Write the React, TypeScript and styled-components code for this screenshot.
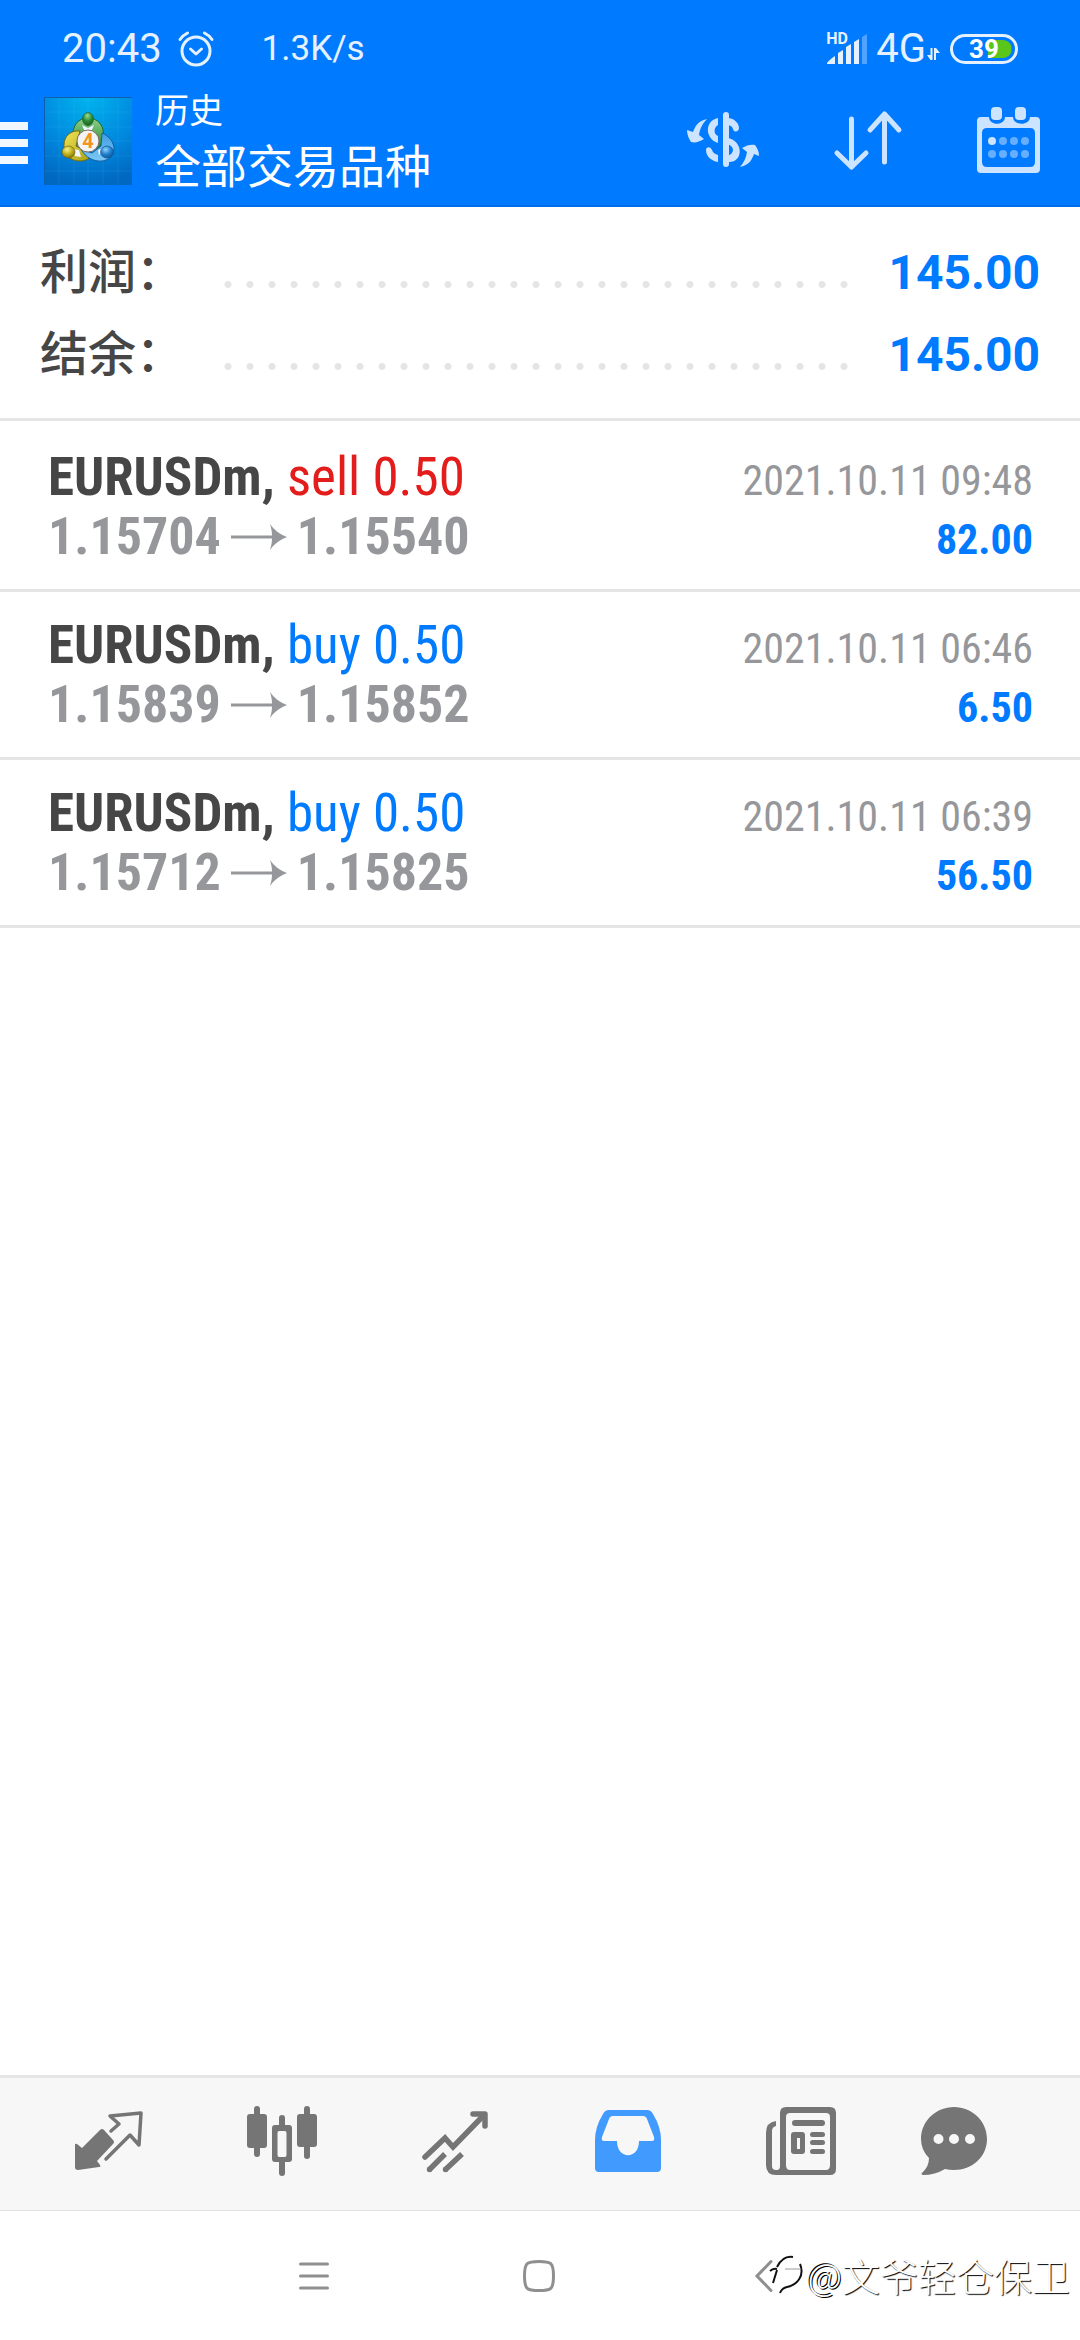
import React from "react";
import styled, { createGlobalStyle } from "styled-components";

const sans = `Roboto, "Noto Sans CJK SC", sans-serif`;
const narrow = `"Roboto Condensed", "Liberation Sans Narrow", "Arial Narrow", Roboto, "Noto Sans CJK SC", sans-serif`;

const Global = createGlobalStyle`
  * { box-sizing: border-box; }
  body { margin: 0; background: #fff; font-family: ${sans}; }
  dl, dd, dt, ul, h1, p { margin: 0; padding: 0; font-weight: inherit; }
  ul { list-style: none; }
  svg { display: block; overflow: visible; }
  button { margin: 0; padding: 0; border: 0; background: none; color: inherit; font: inherit; cursor: pointer; }
`;

const Screen = styled.div`
  min-height: 100vh;
  display: flex;
  flex-direction: column;
`;

const Header = styled.header`
  background: #007aff;
  border-bottom: 2px solid #006ee6;
  color: #fff;
`;

const StatusBar = styled.div`
  height: 90px;
  padding: 8px 62px 0 62px;
  display: flex;
  align-items: center;
  color: #e5f1ff;
`;

const StatusText = styled.span<{ $size: number }>`
  font-size: ${(p) => p.$size}px;
  line-height: 44px;
`;

const Alarm = styled.svg`
  margin: 0 48px 0 16px;
`;

const Signals = styled.div`
  margin-left: auto;
  display: flex;
  align-items: center;
`;

const Signal = styled.div`
  position: relative;
  width: 42px;
  height: 32px;
  margin-right: 8px;
`;

const HdMark = styled.span`
  position: absolute;
  left: 0;
  top: -1px;
  font-size: 16px;
  line-height: 14px;
  font-weight: 700;
`;

const Battery = styled.div`
  width: 68px;
  height: 30px;
  margin-left: 10px;
  padding: 3px;
  border: 3px solid #e5f1ff;
  border-radius: 15px;
  display: flex;
  align-items: center;
  justify-content: center;
  font: 700 26px/18px ${sans};
  color: #fff;
`;

const Charge = styled.span`
  flex: 1;
  border-radius: 9px;
  background: linear-gradient(#5ac51a, #5ac51a) right center / 42% 100% no-repeat;
  text-align: center;
`;

const AppBar = styled.div`
  height: 115px;
  padding-right: 39px;
  display: flex;
  align-items: flex-start;
`;

const MenuButton = styled.button`
  width: 28px;
  margin: 32px 16px 0 0;
  display: grid;
  gap: 9px;
`;

const MenuBar = styled.span`
  height: 8px;
  background: #f0f7ff;
`;

const Logo = styled.svg`
  margin: 7px 23px 0 0;
`;

const Titles = styled.div`
  flex: 1;
`;

const Caption = styled.p`
  font-size: 34px;
  line-height: 43px;
`;

const Title = styled.h1`
  font-size: 46px;
  line-height: 68px;
`;

const Actions = styled.div`
  display: flex;
  gap: 75px;
  margin-top: 17px;
  color: #cce4ff;
`;

const Summary = styled.dl`
  padding: 25px 40px 22px;
  border-bottom: 3px solid #e5e5e5;
`;

const SummaryRow = styled.div`
  height: 82px;
  display: flex;
  align-items: center;
  font-size: 48px;
  line-height: 82px;
`;

const Label = styled.dt`
  width: 177px;
  color: #464646;
  font-weight: 500;
`;

const Dots = styled.span`
  flex: 1;
  height: 7px;
  margin: 22px 33px 0 0;
  background: radial-gradient(circle at center, #e5e5e5 3px, transparent 4px) left center / 22px 7px repeat-x;
`;

const Total = styled.dd`
  color: #007aff;
  font-weight: 700;
`;

const Deals = styled.ul`
  padding-top: 3px;
`;

const Deal = styled.li`
  padding: 24px 47px 23px 48px;
  border-bottom: 3px solid #e5e5e5;
  font-family: ${narrow};
`;

const Line = styled.div<{ $size: number }>`
  height: 59px;
  display: flex;
  align-items: baseline;
  justify-content: space-between;
  font-size: ${(p) => p.$size}px;
  line-height: 59px;
`;

const Big = styled.span<{ $color: string; $bold?: boolean }>`
  color: ${(p) => p.$color};
  font-weight: ${(p) => (p.$bold ? 700 : 400)};
`;

const Small = styled.span<{ $color: string; $bold?: boolean }>`
  font-size: 42px;
  color: ${(p) => p.$color};
  font-weight: ${(p) => (p.$bold ? 700 : 400)};
`;

const Prices = styled.span`
  display: flex;
  align-items: center;
  gap: 10px;
`;

const Empty = styled.div`
  flex: 1;
`;

const Tabs = styled.nav`
  height: 136px;
  padding: 0 60px 6px 22px;
  display: grid;
  grid-template-columns: repeat(5, 173fr) 133fr;
  border-top: 3px solid #e5e5e5;
  border-bottom: 1px solid #e0e0e0;
  background: #f7f7f7;
`;

const Tab = styled.button<{ $active?: boolean }>`
  display: flex;
  align-items: center;
  justify-content: center;
  color: ${(p) => (p.$active ? "#419bff" : "#757575")};
`;

const SystemNav = styled.nav`
  position: relative;
  height: 129px;
  padding: 0 204px 0 202px;
  display: grid;
  grid-template-columns: repeat(3, 1fr);
  color: #8f8f8f;
`;

const SystemButton = styled.button`
  display: flex;
  align-items: center;
  justify-content: center;
`;

const Watermark = styled.div`
  position: absolute;
  right: 10px;
  top: 35px;
  display: flex;
  align-items: center;
  gap: 3px;
  color: #fff;
  font: 300 38px/58px "Noto Sans CJK SC", sans-serif;
  text-shadow: 1px 1px 1px #000;
`;

const Handle = styled.span`
  text-shadow: 1px 1px 0 #000, -1px -1px 0 #000;
`;

const deals = [
  { side: "sell", volume: "0.50", open: "1.15704", close: "1.15540", time: "2021.10.11 09:48", profit: "82.00" },
  { side: "buy", volume: "0.50", open: "1.15839", close: "1.15852", time: "2021.10.11 06:46", profit: "6.50" },
  { side: "buy", volume: "0.50", open: "1.15712", close: "1.15825", time: "2021.10.11 06:39", profit: "56.50" },
];

const totals = [
  { label: "利润：", value: "145.00" },
  { label: "结余：", value: "145.00" },
];

function AlarmIcon() {
  return (
    <Alarm width="36" height="36" viewBox="0 0 36 36" fill="none" stroke="currentColor" strokeWidth="3" strokeLinecap="round" strokeLinejoin="round">
      <circle cx="18" cy="20" r="14" />
      <path d="M12.5 18l5.500 5 5.500-5M2 8.500C4 5.500 6.500 3.500 9.500 2M34 8.500C32 5.500 29.500 3.500 26.500 2" />
    </Alarm>
  );
}

function SignalIcon() {
  return (
    <Signal>
      <HdMark>HD</HdMark>
      <svg width="42" height="32" viewBox="0 0 42 32" fill="currentColor">
        <path d="M1 30c2-3 5-5 8-7v8H1zM12 20l5-3v14h-5zM20 14l5-3v20h-5zM28 9l5-3v25h-5z" />
        <path d="M36 4l5-3v30h-5z" opacity=".35" />
      </svg>
    </Signal>
  );
}

function DataArrows() {
  return (
    <svg width="14" height="26" viewBox="0 0 14 26" fill="currentColor">
      <path d="M4.500 12h2v12h-2L1 19h3.500zM8 12h2l4 5h-4v7H8z" />
    </svg>
  );
}

function LogoIcon() {
  return (
    <Logo width="88" height="88" viewBox="0 0 88 88">
      <defs>
        <radialGradient id="bg" cx=".5" cy="0" r="1">
          <stop offset="0" stopColor="#00b4ee" />
          <stop offset=".6" stopColor="#0087de" />
          <stop offset="1" stopColor="#0068c0" />
        </radialGradient>
        <linearGradient id="green" x2="0" y2="1">
          <stop offset="0" stopColor="#8fd08a" />
          <stop offset="1" stopColor="#23842c" />
        </linearGradient>
        <linearGradient id="yellow" x2="1" y2="1">
          <stop offset="0" stopColor="#f0e65a" />
          <stop offset="1" stopColor="#a89a0c" />
        </linearGradient>
        <linearGradient id="blue" x2="0" y2="1">
          <stop offset="0" stopColor="#3f9de0" />
          <stop offset="1" stopColor="#7cc8f6" />
        </linearGradient>
        <radialGradient id="greenHead" cx=".45" cy=".25" r=".8">
          <stop offset="0" stopColor="#9bdc90" />
          <stop offset=".5" stopColor="#2f8f38" />
          <stop offset="1" stopColor="#145c20" />
        </radialGradient>
        <radialGradient id="yellowHead" cx=".4" cy=".3" r=".8">
          <stop offset="0" stopColor="#f7f08a" />
          <stop offset=".5" stopColor="#c0b01c" />
          <stop offset="1" stopColor="#6f6606" />
        </radialGradient>
        <radialGradient id="blueHead" cx=".4" cy=".3" r=".8">
          <stop offset="0" stopColor="#8fd0ff" />
          <stop offset=".5" stopColor="#2180cc" />
          <stop offset="1" stopColor="#0a4f92" />
        </radialGradient>
      </defs>
      <rect width="88" height="88" fill="url(#bg)" />
      <path d="M15 0v88M30 0v88M44 0v88M59 0v88M74 0v88M0 15h88M0 30h88M0 44h88M0 59h88M0 74h88" stroke="#6fd0ff" strokeOpacity=".12" />
      <path d="M.5 88V.5H88" fill="none" stroke="#0a5fae" />
      <path d="M29 40c-1-11 5-19 15-19s17 8 15 19c-1 7-3 10-6 12l-5-16-4-4-5 5z" fill="url(#green)" stroke="#1c6b2a" />
      <path d="M36 34c-9-1-16 5-16 14-1 10 7 16 16 16 6 0 11-3 13-7l-9-4-8-4z" fill="url(#yellow)" stroke="#756c0c" />
      <path d="M58 36c7 3 12 9 12 16-1 8-8 13-16 12-8-1-14-6-17-12l11 4 9-7z" fill="url(#blue)" stroke="#14609f" />
      <path d="M38 28l6 3 6-3-3 7h-6zM28 52l7 1 2 7-6-1zM55 58l-1-5 5-2-1 4z" fill="#eef6ff" />
      <ellipse cx="44" cy="22" rx="5.500" ry="6.500" fill="url(#greenHead)" stroke="#165a22" strokeWidth=".6" />
      <ellipse cx="24.500" cy="55" rx="6.500" ry="6" fill="url(#yellowHead)" stroke="#6a6208" strokeWidth=".6" />
      <ellipse cx="63" cy="55" rx="6.500" ry="6" fill="url(#blueHead)" stroke="#0d4c88" strokeWidth=".6" />
      <circle cx="44" cy="44" r="11" fill="#f4f4f6" stroke="#7d6a66" />
      <text x="44" y="51" textAnchor="middle" fontFamily="Roboto" fontSize="20" fontWeight="700" fill="#f59321">4</text>
    </Logo>
  );
}

function CurrencyIcon() {
  return (
    <svg width="72" height="66" viewBox="0 0 72 66" fill="currentColor">
      <path d="M20 12C10 14 8 20 6 25L0 23c0 5 2 9 4 12 4 1 8 0 13-3l-5-4c1-6 3-11 8-16z" />
      <path d="M53 60c10-2 12-8 14-13l5 2c0-5-2-8-4-11-4-1-8 0-13 3l5 4c-1 6-3 10-7 15z" />
      <rect x="36" y="5" width="6" height="55" rx="3" />
      <path d="M31 11v7c-4 2-5 9 0 11v7c-13-4-14-22 0-25zM31 48v7c-7-1-12-6-12-12 0-3 4-4 6 0 1 3 3 4 6 5z" />
      <path d="M40 11c7 0 12 5 12 10 0 4-5 5-6 1-1-3-3-4-6-4zM40 31c17 2 17 26 0 24v-6c8-2 8-10 0-12z" />
    </svg>
  );
}

function SortIcon() {
  return (
    <svg width="68" height="66" viewBox="0 0 68 66" fill="none" stroke="currentColor" strokeWidth="5" strokeLinecap="round" strokeLinejoin="round">
      <path d="M17.500 12v48M3 46l14.500 14L32 46M50.500 55V7M36 23L50.500 7 65 23" />
    </svg>
  );
}

function CalendarIcon() {
  return (
    <svg width="64" height="66" viewBox="0 0 64 66" fill="currentColor">
      <path fillRule="evenodd" d="M4 10h8c0 9 16 9 16 0h8c0 9 17 9 17 0h6q4 0 4 4v48q0 4-4 4H4q-4 0-4-4V14q0-4 4-4zm6 11q-5 0-5 5v29q0 5 5 5h43q5 0 5-5V26q0-5-5-5z" />
      <rect x="14" y="0" width="11" height="13" rx="4" />
      <rect x="38" y="0" width="11" height="13" rx="4" />
      <circle cx="15" cy="34" r="4" />
      <g opacity=".5">
        <circle cx="26" cy="34" r="4" />
        <circle cx="37" cy="34" r="4" />
        <circle cx="48" cy="34" r="4" />
        <circle cx="15" cy="47" r="4" />
        <circle cx="26" cy="47" r="4" />
        <circle cx="37" cy="47" r="4" />
        <circle cx="48" cy="47" r="4" />
      </g>
    </svg>
  );
}

function PriceArrow() {
  return (
    <svg width="56" height="26" viewBox="0 0 56 26" fill="#96979b">
      <path d="M0 11.500h41C41 7 40 4 39 0q6 9 17 13-11 4-17 13c1-4 2-7 2-11.500H0z" />
    </svg>
  );
}

function QuotesIcon() {
  return (
    <svg width="68" height="60" viewBox="0 0 68 60">
      <path d="M0 34q0-2 2-1l5 4 18-18q2-2 4 0l9 10q2 2 0 4L22 50l3 4q1 2-1 2L3 59q-3 0-3-3z" fill="currentColor" />
      <path d="M36 20l8-7-9-8 31-3-2 32-9-10-24 24" fill="none" stroke="currentColor" strokeWidth="3.500" strokeLinecap="round" strokeLinejoin="round" />
    </svg>
  );
}

function CandlesIcon() {
  return (
    <svg width="70" height="70" viewBox="0 0 70 70" fill="currentColor">
      <rect x="7" y="0" width="6" height="51" rx="3" />
      <rect x="0" y="8" width="20" height="34" rx="3" />
      <rect x="57" y="0" width="6" height="53" rx="3" />
      <rect x="50" y="8" width="20" height="33" rx="3" />
      <rect x="32" y="9" width="6" height="14" rx="3" />
      <rect x="32" y="52" width="6" height="18" rx="3" />
      <path fillRule="evenodd" d="M28 19h14q3 0 3 3v31q0 3-3 3H28q-3 0-3-3V22q0-3 3-3zm4 6q-1.500 0-1.500 2v22q0 2 1.500 2h6q1.500 0 1.500-2V27q0-2-1.500-2z" />
    </svg>
  );
}

function ChartIcon() {
  return (
    <svg width="66" height="62" viewBox="0 0 66 62" fill="none" stroke="currentColor" strokeWidth="5.500" strokeLinejoin="miter">
      <path d="M3 47l20-19 8 9L62 5" strokeLinecap="round" />
      <path d="M51 4h12v12" strokeLinecap="round" strokeLinejoin="round" />
      <path d="M7 60l16-16M23 60l17-16" />
      <g fill="currentColor" stroke="none">
        <circle cx="7.500" cy="59.500" r="2.700" />
        <circle cx="23.500" cy="59.500" r="2.700" />
      </g>
    </svg>
  );
}

function TradeIcon() {
  return (
    <svg width="66" height="62" viewBox="0 0 66 62" fill="currentColor">
      <path fillRule="evenodd" d="M14 0h38q4 0 6 4 8 13 8 26v28q0 4-4 4H4q-4 0-4-4V30Q0 17 8 4q2-4 6-4zm4 6q-3 0-4 3L7 27q-1 4 2 4h13c0 19 22 19 22 0h13q3 0 2-4L52 9q-1-3-4-3z" />
    </svg>
  );
}

function NewsIcon() {
  return (
    <svg width="70" height="68" viewBox="0 0 70 68" fill="currentColor">
      <path fillRule="evenodd" d="M20 0h44q6 0 6 6v56q0 6-6 6H10Q0 68 0 58V26q0-11 10-12v5q-4 1-4 5v35q0 4 4 4h1q3 0 3-4V6q0-6 6-6zm4 6q-4 0-4 4v48q0 5 4 5h36q4 0 4-5V10q0-4-4-4z" />
      <rect x="26" y="13" width="33" height="6" rx="3" />
      <path fillRule="evenodd" d="M28 25h8q3 0 3 3v16q0 3-3 3h-8q-3 0-3-3V28q0-3 3-3zm3 6v11h3V31z" />
      <rect x="44" y="25" width="15" height="5" rx="2.500" />
      <rect x="44" y="33" width="15" height="5" rx="2.500" />
      <rect x="44" y="42" width="15" height="5" rx="2.500" />
    </svg>
  );
}

function ChatIcon() {
  return (
    <svg width="66" height="68" viewBox="0 0 66 68" fill="currentColor">
      <path fillRule="evenodd" d="M33 0c18 0 33 14 33 32S51 63 33 63q-5 0-9-1-10 6-22 6-3-1 0-3 6-6 6-14Q0 43 0 32C0 14 15 0 33 0zM17.500 27a5 5 0 100 10 5 5 0 000-10zM33 27a5 5 0 100 10 5 5 0 000-10zM49 27a5 5 0 100 10 5 5 0 000-10z" />
    </svg>
  );
}

const tabs = [
  { name: "行情", icon: <QuotesIcon /> },
  { name: "图表", icon: <CandlesIcon /> },
  { name: "交易", icon: <ChartIcon /> },
  { name: "历史", icon: <TradeIcon />, active: true },
  { name: "新闻", icon: <NewsIcon /> },
  { name: "消息", icon: <ChatIcon /> },
];

export default function App() {
  return (
    <Screen>
      <Global />
      <Header>
        <StatusBar>
          <StatusText $size={40}>20:43</StatusText>
          <AlarmIcon />
          <StatusText $size={35}>1.3K/s</StatusText>
          <Signals>
            <SignalIcon />
            <StatusText $size={40}>4G</StatusText>
            <DataArrows />
            <Battery>
              <Charge>39</Charge>
            </Battery>
          </Signals>
        </StatusBar>
        <AppBar>
          <MenuButton aria-label="菜单">
            <MenuBar />
            <MenuBar />
            <MenuBar />
          </MenuButton>
          <LogoIcon />
          <Titles>
            <Caption>历史</Caption>
            <Title>全部交易品种</Title>
          </Titles>
          <Actions>
            <button aria-label="品种"><CurrencyIcon /></button>
            <button aria-label="排序"><SortIcon /></button>
            <button aria-label="日期"><CalendarIcon /></button>
          </Actions>
        </AppBar>
      </Header>

      <Summary>
        {totals.map((t) => (
          <SummaryRow key={t.label}>
            <Label>{t.label}</Label>
            <Dots />
            <Total>{t.value}</Total>
          </SummaryRow>
        ))}
      </Summary>

      <Deals>
        {deals.map((d) => (
          <Deal key={d.time}>
            <Line $size={53}>
              <span>
                <Big $color="#464646" $bold>EURUSDm, </Big>
                <Big $color={d.side === "sell" ? "#e31c1c" : "#007aff"}>{d.side} {d.volume}</Big>
              </span>
              <Small $color="#96979b">{d.time}</Small>
            </Line>
            <Line $size={52}>
              <Prices>
                <Big $color="#96979b" $bold>{d.open}</Big>
                <PriceArrow />
                <Big $color="#96979b" $bold>{d.close}</Big>
              </Prices>
              <Small $color="#007aff" $bold>{d.profit}</Small>
            </Line>
          </Deal>
        ))}
      </Deals>

      <Empty />

      <Tabs>
        {tabs.map((t) => (
          <Tab key={t.name} aria-label={t.name} $active={t.active}>{t.icon}</Tab>
        ))}
      </Tabs>

      <SystemNav>
        <SystemButton aria-label="最近任务">
          <svg width="30" height="28" viewBox="0 0 30 28" stroke="currentColor" strokeWidth="3" strokeLinecap="round">
            <path d="M1.500 2h27M1.500 14h27M1.500 26h27" />
          </svg>
        </SystemButton>
        <SystemButton aria-label="主屏幕">
          <svg width="32" height="32" viewBox="0 0 32 32" fill="none" stroke="currentColor" strokeWidth="3">
            <path d="M16 1.500c12 0 14.500 1 14.500 14.500S28 30.500 16 30.500 1.500 29.500 1.500 16 4 1.500 16 1.500z" />
          </svg>
        </SystemButton>
        <SystemButton aria-label="返回">
          <svg width="18" height="32" viewBox="0 0 18 32" fill="none" stroke="currentColor" strokeWidth="3" strokeLinecap="round">
            <path d="M16 1.500L2 16l14 14.500" />
          </svg>
        </SystemButton>
        <Watermark>
          <svg width="34" height="40" viewBox="0 0 34 40" fill="none">
            <path d="M7 13C12 1 28 1 31 13c1 11-5 19-14 20q-4 1-7 5L3 27z" fill="#fff" />
            <path d="M7 12C11 4 17 1 23 2M30 9c5 12-3 21-13 23q-5 1-7 6M0 16q3-3 7-2M7 15L3 28" stroke="#111" strokeWidth="2" />
            <path d="M15 14h16" stroke="#999" />
          </svg>
          <span><Handle>@</Handle>文爷轻仓保卫</span>
        </Watermark>
      </SystemNav>
    </Screen>
  );
}
